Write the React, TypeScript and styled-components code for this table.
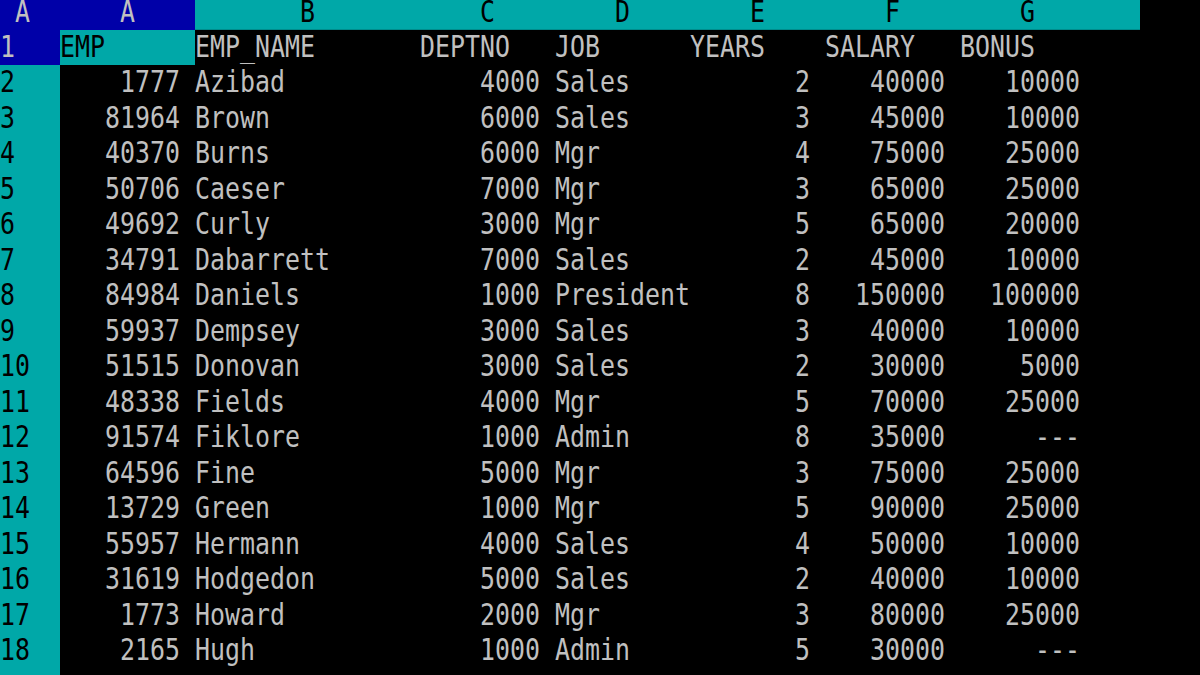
import React from "react";
import styled, { createGlobalStyle } from "styled-components";

const BLUE = "#0000a8";
const CYAN = "#00a8a8";
const GREY = "#c0c0c0";
const CH = 15;

const Global = createGlobalStyle`
  html, body { margin: 0; padding: 0; background: #000; overflow: hidden; }
  #root { width: 1200px; height: 675px; overflow: hidden; background: #000; }
`;

const Sheet = styled.div`
  display: grid;
  grid-template-columns: 60px 135px 225px 135px 135px 135px 135px 135px 45px;
  grid-template-rows: 29.5px repeat(19, 35.5px);
  width: 1200px;
  height: 675px;
  overflow: hidden;
  font-family: "DejaVu Sans Mono", "Liberation Mono", monospace;
  font-size: 24.9px;
  color: ${GREY};
`;

const HeaderCell = styled.div<{ $active?: boolean }>`
  display: flex;
  align-items: center;
  justify-content: center;
  padding-bottom: 4px;
  box-sizing: border-box;
  background: ${(p) => (p.$active ? BLUE : CYAN)};
  color: ${(p) => (p.$active ? GREY : "#000")};
  border-bottom: 1px solid ${(p) => (p.$active ? BLUE : "#008c8c")};
  white-space: pre;
`;

const CornerCell = styled(HeaderCell)`
  justify-content: flex-start;
`;

const RowLabel = styled.div<{ $active?: boolean }>`
  display: flex;
  align-items: center;
  background: ${(p) => (p.$active ? BLUE : CYAN)};
  color: ${(p) => (p.$active ? GREY : "#000")};
  white-space: pre;
`;

const Cell = styled.div<{ $right?: boolean; $selected?: boolean }>`
  display: flex;
  align-items: center;
  justify-content: ${(p) => (p.$right ? "flex-end" : "flex-start")};
  padding-right: ${(p) => (p.$right ? `${CH}px` : "0")};
  background: ${(p) => (p.$selected ? CYAN : "#000")};
  color: ${(p) => (p.$selected ? "#000" : GREY)};
  white-space: pre;
  overflow: visible;
`;

const Glyphs = styled.span`
  display: inline-block;
  transform: scaleY(1.2);
  line-height: 1;
`;

type Row = [string, string, string, string, string, string, string];

const header: Row = ["EMP", "EMP_NAME", "DEPTNO", "JOB", "YEARS", "SALARY", "BONUS"];

const rows: Row[] = [
  ["1777", "Azibad", "4000", "Sales", "2", "40000", "10000"],
  ["81964", "Brown", "6000", "Sales", "3", "45000", "10000"],
  ["40370", "Burns", "6000", "Mgr", "4", "75000", "25000"],
  ["50706", "Caeser", "7000", "Mgr", "3", "65000", "25000"],
  ["49692", "Curly", "3000", "Mgr", "5", "65000", "20000"],
  ["34791", "Dabarrett", "7000", "Sales", "2", "45000", "10000"],
  ["84984", "Daniels", "1000", "President", "8", "150000", "100000"],
  ["59937", "Dempsey", "3000", "Sales", "3", "40000", "10000"],
  ["51515", "Donovan", "3000", "Sales", "2", "30000", "5000"],
  ["48338", "Fields", "4000", "Mgr", "5", "70000", "25000"],
  ["91574", "Fiklore", "1000", "Admin", "8", "35000", "---"],
  ["64596", "Fine", "5000", "Mgr", "3", "75000", "25000"],
  ["13729", "Green", "1000", "Mgr", "5", "90000", "25000"],
  ["55957", "Hermann", "4000", "Sales", "4", "50000", "10000"],
  ["31619", "Hodgedon", "5000", "Sales", "2", "40000", "10000"],
  ["1773", "Howard", "2000", "Mgr", "3", "80000", "25000"],
  ["2165", "Hugh", "1000", "Admin", "5", "30000", "---"],
];

const numericCols = [true, false, true, false, true, true, true];
const colLetters = ["A", "B", "C", "D", "E", "F", "G"];

export default function App() {
  return (
    <>
      <Global />
      <Sheet>
        <CornerCell $active>
          <Glyphs>{" A"}</Glyphs>
        </CornerCell>
        {colLetters.map((l, i) => (
          <HeaderCell key={l} $active={i === 0}>
            <Glyphs>{l}</Glyphs>
          </HeaderCell>
        ))}
        <HeaderCell />

        <RowLabel $active>
          <Glyphs>1</Glyphs>
        </RowLabel>
        {header.map((h, i) => (
          <Cell key={h} $selected={i === 0}>
            <Glyphs>{h}</Glyphs>
          </Cell>
        ))}
        <Cell />

        {rows.map((r, ri) => (
          <React.Fragment key={ri}>
            <RowLabel>
              <Glyphs>{String(ri + 2)}</Glyphs>
            </RowLabel>
            {r.map((v, ci) => (
              <Cell key={ci} $right={numericCols[ci]}>
                <Glyphs>{v}</Glyphs>
              </Cell>
            ))}
            <Cell />
          </React.Fragment>
        ))}
        <RowLabel />
      </Sheet>
    </>
  );
}
